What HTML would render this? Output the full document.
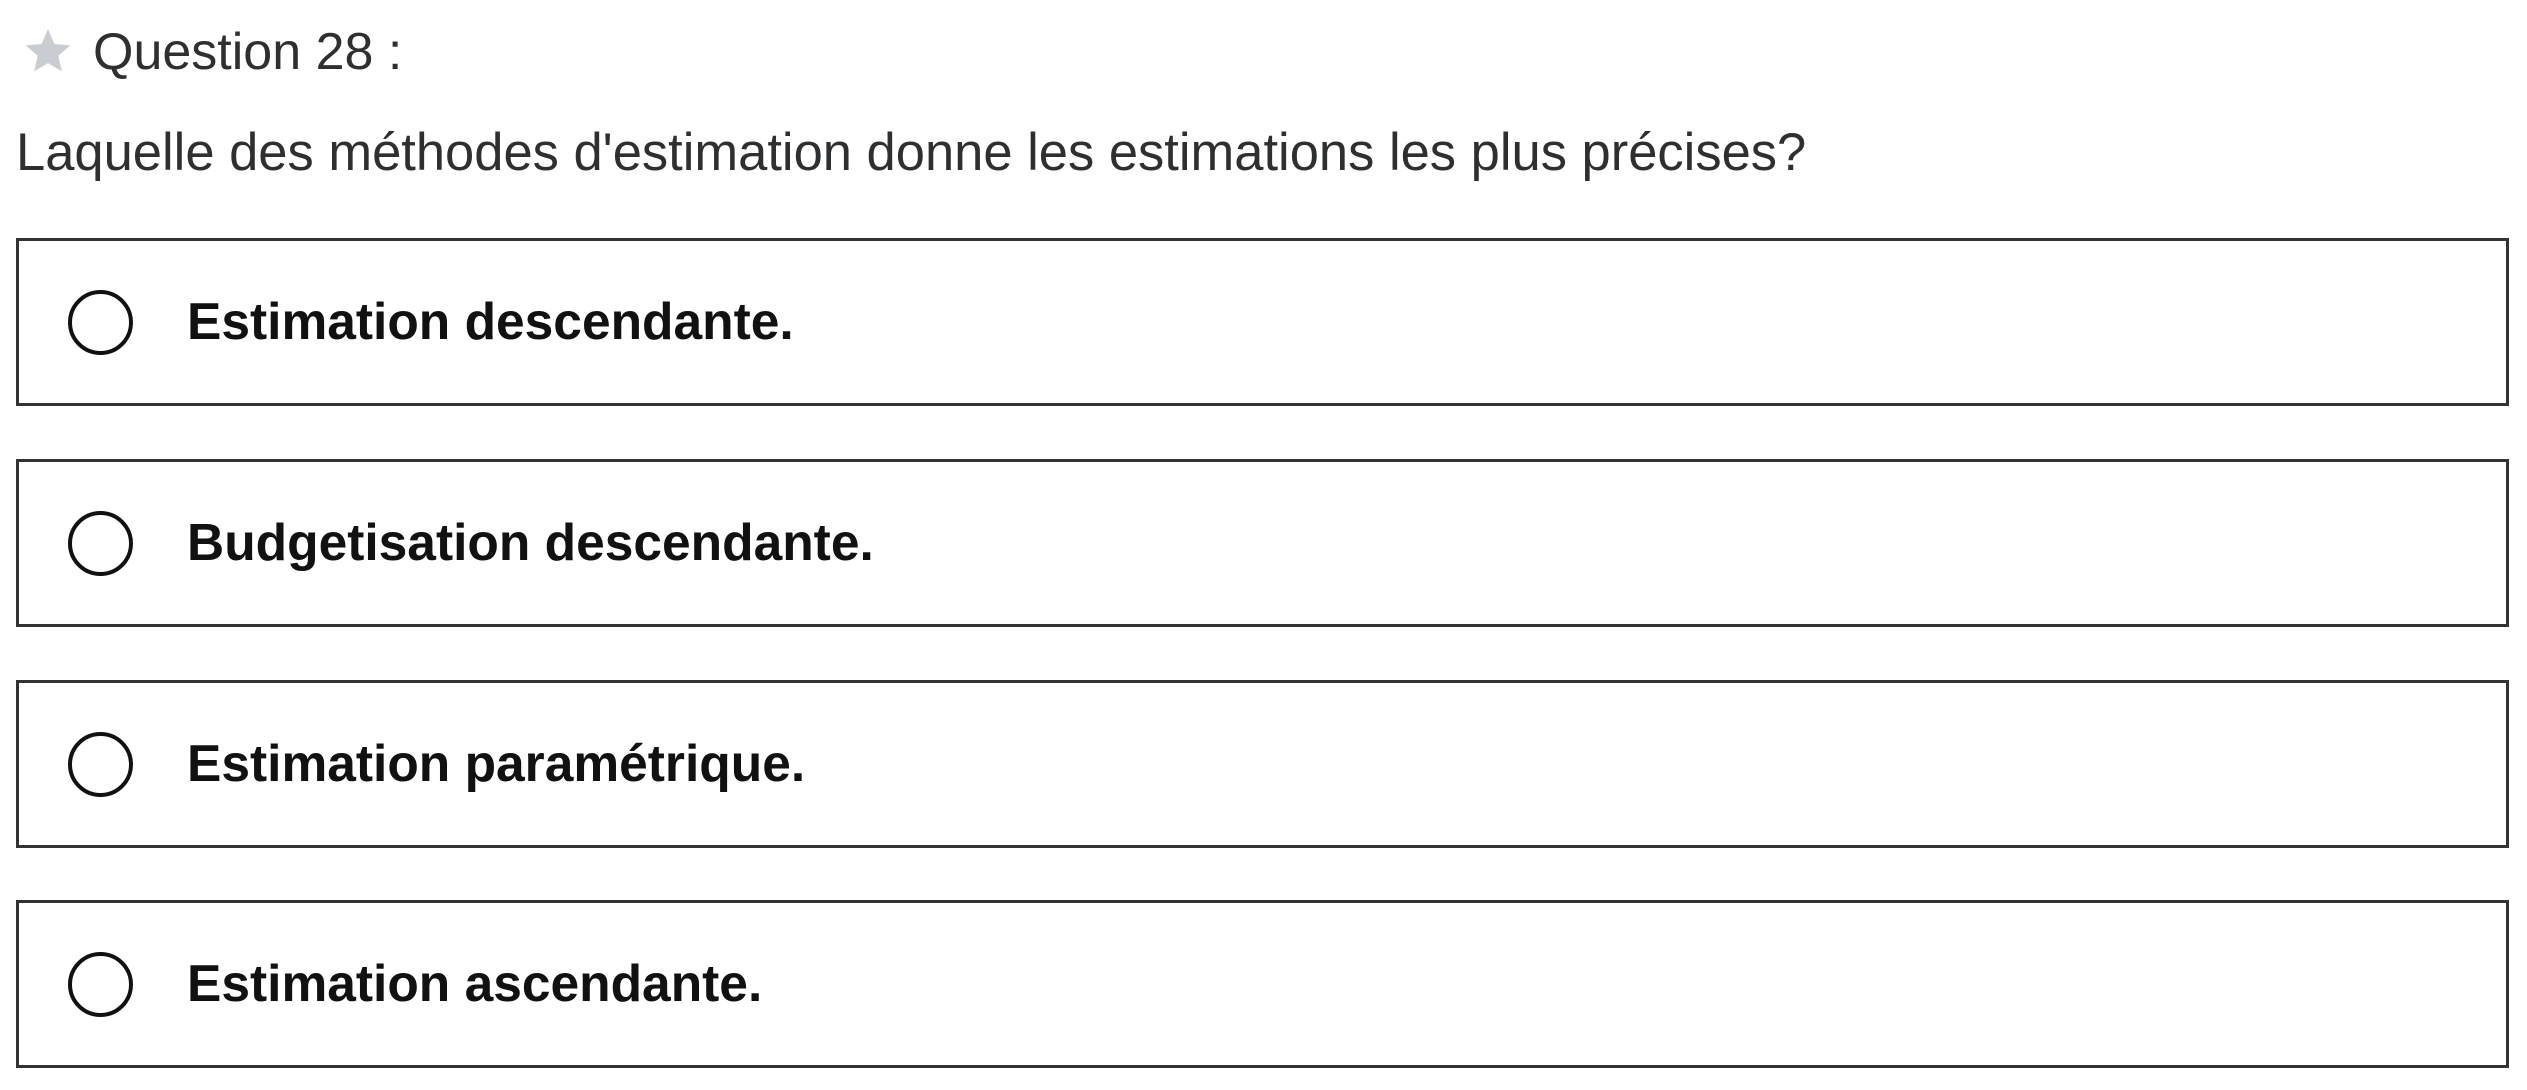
<!DOCTYPE html>
<html><head><meta charset="utf-8"><style>
body{margin:0;width:2527px;height:1090px;background:#fff;position:relative;overflow:hidden;font-family:"Liberation Sans",sans-serif;}
.q{position:absolute;left:93px;top:22px;font-size:52px;color:#2d2f31;}
.star{position:absolute;left:22px;top:26px;}
.t{position:absolute;left:16px;top:122px;font-size:52.5px;color:#2d2f31;white-space:nowrap;}
.box{position:absolute;left:16px;width:2487px;height:162px;border:3px solid #333;}
.box .c{position:absolute;left:49px;top:49px;width:57px;height:57px;border:4.5px solid #111;border-radius:50%;}
.box .l{position:absolute;left:168px;top:50px;font-size:51.5px;font-weight:bold;color:#111;white-space:nowrap;}
</style></head><body>
<svg class="star" width="52" height="50" viewBox="0 0 24 24"><path d="M12 1.5l3.1 7.2 7.6.6-5.8 5 1.8 7.5L12 17.8l-6.7 4 1.8-7.5-5.8-5 7.6-.6z" fill="#c9ccd1"/></svg>
<div class="q">Question 28 :</div>
<div class="t">Laquelle des méthodes d'estimation donne les estimations les plus précises?</div>
<div class="box" style="top:238px"><div class="c"></div><div class="l">Estimation descendante.</div></div>
<div class="box" style="top:459px"><div class="c"></div><div class="l">Budgetisation descendante.</div></div>
<div class="box" style="top:680px"><div class="c"></div><div class="l">Estimation paramétrique.</div></div>
<div class="box" style="top:900px"><div class="c"></div><div class="l">Estimation ascendante.</div></div>
</body></html>
